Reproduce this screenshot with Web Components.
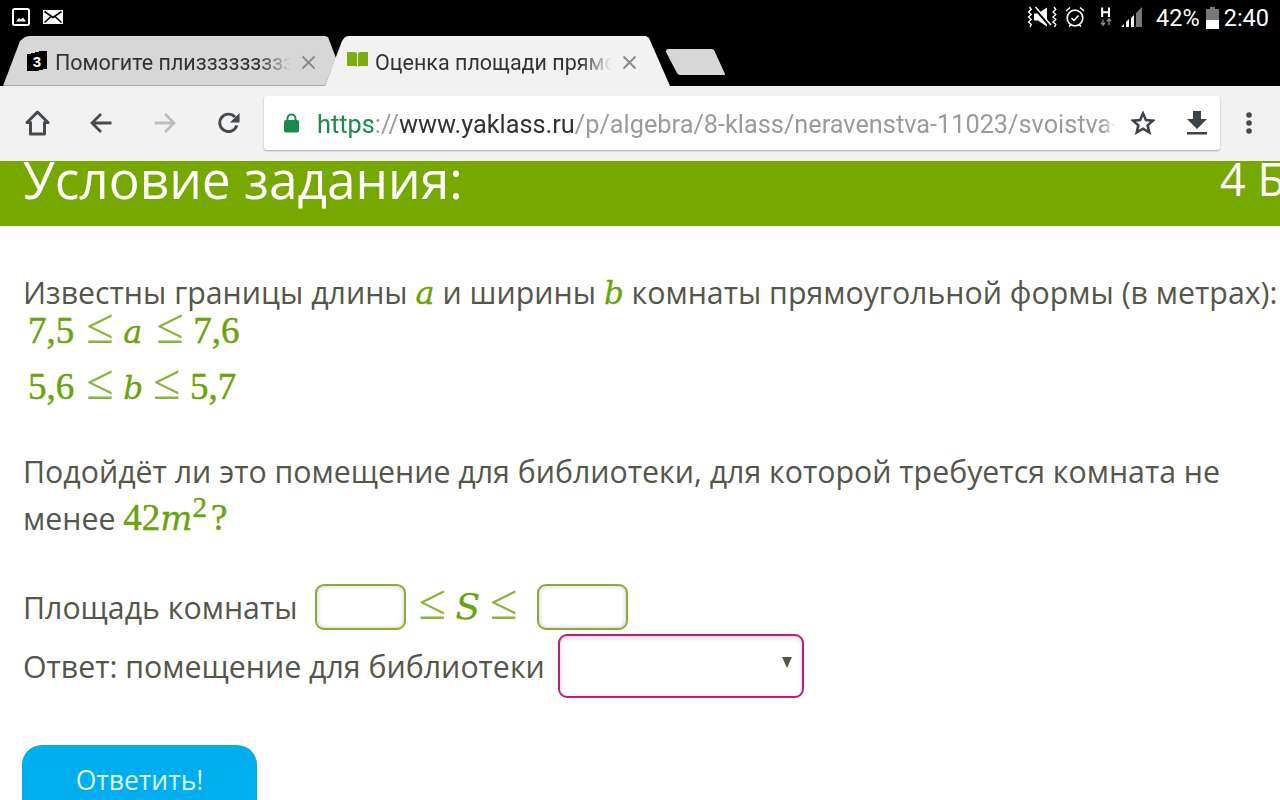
<!DOCTYPE html>
<html lang="ru"><head><meta charset="utf-8"><title>Оценка площади</title>
<style>html,body{margin:0;padding:0;background:#fff}</style></head>
<body>
<x-page>
  <x-status-bar></x-status-bar>
  <x-tab-strip>
    <x-tab kind="first" label="Помогите плизззззззззззз"></x-tab>
    <x-tab kind="active" label="Оценка площади прямоугольника"></x-tab>
    <x-new-tab></x-new-tab>
  </x-tab-strip>
  <x-toolbar></x-toolbar>
  <x-banner title="Условие задания:" score="4 Б"></x-banner>
  <x-task></x-task>
</x-page>
<script>
function def(name, css, html){
  customElements.define(name, class extends HTMLElement{
    constructor(){super();this.attachShadow({mode:'open'});}
    connectedCallback(){
      const h = typeof html==='function'?html(this):html;
      this.shadowRoot.innerHTML='<style>'+css+'</style>'+h;
    }
  });
}
def('x-page',`:host{display:block;width:1280px;height:800px;overflow:hidden;position:relative;background:#fff;font-family:"Open Sans",sans-serif}`,`<slot></slot>`);

def('x-status-bar',`:host{display:flex;align-items:center;justify-content:space-between;height:33px;background:#000;color:#fff;font:23.500px Roboto,sans-serif;padding:0 11px 0 12px;box-sizing:border-box}
.l,.r{display:flex;align-items:center}.l svg{display:block}
.t{position:relative;top:1px}`,`
<div class="l" style="gap:13px">
<svg width="18" height="18" viewBox="0 0 18 18"><rect x="1" y="1" width="16" height="16" rx="1.500" fill="none" stroke="#fff" stroke-width="2"/><path d="M4 13.500l3-3.500 2 1.500 2-2 3 4z" fill="#fff"/></svg>
<svg width="20" height="14" viewBox="0 0 20 14"><rect width="20" height="14" fill="#fff"/><path d="M1.500 1.500L10 7.500 18.500 1.500M1.500 12.500L8 6.500M18.500 12.500L12 6.500" fill="none" stroke="#000" stroke-width="1.600"/></svg>
</div>
<div class="r">
<svg width="30" height="22" viewBox="0 0 30 22" style="margin-right:8px"><path d="M2.500 1l1.800 2.500L1.500 6l2.800 2.500L1.500 11l2.800 2.500L1.500 16l2.800 2.500L3 21M27 1l1.800 2.500L26 6l2.800 2.500L26 11l2.800 2.500L26 16l2.800 2.500L27.500 21" fill="none" stroke="#fff" stroke-width="1.300"/><path d="M7 7.500h4l9-6v19l-9-6H7z" fill="#fff"/><path d="M7 1l17 20" stroke="#000" stroke-width="3"/><path d="M8.500 1L24 19" stroke="#fff" stroke-width="1.500"/></svg>
<svg width="20" height="22" viewBox="0 0 20 22" style="margin-right:15px"><circle cx="10" cy="12" r="7.800" fill="none" stroke="#fff" stroke-width="1.700"/><path d="M6.500 12l2.500 2.500 4.500-5" fill="none" stroke="#fff" stroke-width="1.600"/><path d="M1 5l4-3.500M19 5l-4-3.500M4 20.500l2-2M16 20.500l-2-2" stroke="#fff" stroke-width="1.600"/></svg>
<svg width="12" height="22" viewBox="0 0 14 22" style="margin-right:9px"><path d="M2.500 0v11M10.500 0v11M2.500 5.500h8" stroke="#fff" stroke-width="2.400" fill="none"/><path d="M3.500 20v-6M1 17.500l2.500 3 2.500-3M10.500 20.500v-7M8 16l2.500-3 2.500 3" stroke="#8a8a8a" stroke-width="1.600" fill="none"/></svg>
<svg width="22" height="22" viewBox="0 0 22 22" style="margin-right:13px"><path d="M0 21h3v-3zM5 21h3v-8l-3 3zM10 21h3V9l-3 3z" fill="#fff"/><path d="M15 21h6V1l-6 6z" fill="#777"/></svg>
<span class="t" style="margin-right:6px">42%</span>
<svg width="13" height="22" viewBox="0 0 13 22" style="margin-right:5px;position:relative;top:1px"><path d="M4 0h5v2h4v20H0V2h4z" fill="#777"/><path d="M0 13h13v9H0z" fill="#fff"/></svg>
<span class="t">2:40</span>
</div>`);

def('x-tab-strip',`:host{display:flex;height:53px;background:#000;position:relative}`,`<slot></slot>`);

def('x-tab',`:host{display:flex;align-items:center;height:50px;margin-top:3px;box-sizing:border-box;font:21.500px Roboto,sans-serif;color:#333;position:relative;flex:none}
:host([kind=first]){width:340px;margin-left:3px;background:linear-gradient(#d7d7d7 49px,#a8a8a8 49px);padding:2px 0 0 23px;clip-path:polygon(0 100%,17px 5px,22px 1px,26px 0,322px 0,325px 1px,333px 22px,322px 100%)}
:host([kind=active]){width:347px;margin-left:-18px;background:#f2f2f2;padding:2px 0 0 22px;clip-path:polygon(0 100%,17px 5px,20px 1px,23px 0,321px 0,324px 2px,345px 50px)}
.fav{flex:none;display:block}
.label{white-space:nowrap;overflow:hidden;-webkit-mask-image:linear-gradient(90deg,#000 calc(100% - 32px),transparent);mask-image:linear-gradient(90deg,#000 calc(100% - 32px),transparent)}
:host([kind=first]) .label{width:236px;margin-left:7px}
:host([kind=active]) .label{width:237px;margin-left:7px}
.x{flex:none;margin-left:10px;display:block}`,
 el=>{
  const first=el.getAttribute('kind')==='first';
  const fav=first?`<svg class="fav" width="22" height="22" viewBox="0 0 22 22" style="margin-top:-2px"><path d="M1 4h4V3h4V2h4V1h8v18h-4v1h-4v1H1z" fill="#000"/><text x="11" y="16.500" text-anchor="middle" font-family="Liberation Sans" font-weight="700" font-size="15" fill="#fff">3</text></svg>`
  :`<svg class="fav" width="21" height="16" viewBox="0 0 21 16" style="margin-top:-7px"><path d="M0 1h8l2 1v13.500H9L8 15H0zM21 1h-8l-2 1v13.500h1l1-.5h8z" fill="#7cae10"/></svg>`;
  return fav+`<span class="label">${el.getAttribute('label')}</span><svg class="x" width="15" height="15" viewBox="0 0 15 15"><path d="M1.500 1.500l12 12M13.500 1.500l-12 12" stroke="#8a8a8a" stroke-width="1.900"/></svg>`;
 });

def('x-new-tab',`:host{display:block;flex:none;margin:16px 0 0 -6px;height:26px;width:60px}svg{display:block}`,
 `<svg width="60" height="26" viewBox="0 0 60 26"><path d="M2 0h43.500q2 0 3 2L59 25q.5 1-1 1H14q-2 0-3-2L0 3Q0 0 2 0z" fill="#d7d7d7"/></svg>`);

def('x-toolbar',`:host{display:flex;align-items:center;height:75px;background:#f2f2f2;box-sizing:border-box;padding:0 0 1px 0;position:relative;z-index:2;border-bottom:1px solid #f4f5ec}
svg{display:block;flex:none}
.box{flex:none;width:956px;height:54px;background:#fff;border-radius:3px;box-shadow:0 1px 2px rgba(0,0,0,.3);display:flex;align-items:center;margin-left:24px;box-sizing:border-box;padding-left:20px;font:25.300px Roboto,sans-serif}
.url{width:799px;margin-left:18px;padding-top:3px;white-space:nowrap;overflow:hidden;color:#9b9b9b;-webkit-mask-image:linear-gradient(90deg,#000 calc(100% - 14px),transparent);mask-image:linear-gradient(90deg,#000 calc(100% - 14px),transparent)}
.g{color:#1b8a4c}.d{color:#333}`,`
<svg style="margin-left:25px" width="25" height="26" viewBox="0 0 25 26"><path d="M12.500 2L2 12.500h3.500V24h14V12.500H23z" fill="none" stroke="#444a4d" stroke-width="3" stroke-linejoin="round"/></svg>
<svg style="margin-left:40px" width="22" height="22" viewBox="0 0 22 22"><path d="M21.500 11H3M11 2l-9 9 9 9" fill="none" stroke="#444a4d" stroke-width="2.800"/></svg>
<svg style="margin-left:42px" width="22" height="22" viewBox="0 0 22 22"><path d="M.5 11H19M11 2l9 9-9 9" fill="none" stroke="#bdbdbd" stroke-width="2.800"/></svg>
<svg style="margin-left:42px" width="22" height="24" viewBox="0 0 24 24"><path d="M20.500 14.500A9.500 9.500 0 1 1 18.500 5.500" fill="none" stroke="#444a4d" stroke-width="3.200"/><path d="M23.500 1v10.500H13z" fill="#444a4d"/></svg>
<div class="box">
<svg width="15" height="20" viewBox="0 0 15 20"><path d="M3.500 8V5.500a4 4 0 0 1 8 0V8" fill="none" stroke="#1b8a4c" stroke-width="2"/><rect y="7" width="15" height="12.500" rx="2" fill="#1b8a4c"/></svg>
<div class="url"><span class="g">https</span>://<span class="d">www.yaklass.ru</span>/p/algebra/8-klass/neravenstva-11023/svoistva-chislovykh</div>
<svg style="margin-left:15px" width="24" height="24" viewBox="0 0 26 26"><path d="M13 2.500l3.100 7.200 7.800.7-5.900 5.200 1.800 7.600L13 19.200 6.200 23.200 8 15.600 2.100 10.400l7.800-.7z" fill="none" stroke="#3e4347" stroke-width="2.800"/></svg>
<svg style="margin-left:32px" width="20" height="24" viewBox="0 0 20 24"><path d="M6 0h8v8h6L10 18 0 8h6z" fill="#3e4347"/><rect y="21" width="20" height="2.500" fill="#3e4347"/></svg>
</div>
<svg style="margin-left:25px" width="8" height="24" viewBox="0 0 8 24"><circle cx="4" cy="4" r="2.800" fill="#444a4d"/><circle cx="4" cy="12" r="2.800" fill="#444a4d"/><circle cx="4" cy="20" r="2.800" fill="#444a4d"/></svg>`);

def('x-banner',`:host{display:flex;justify-content:space-between;align-items:flex-end;height:65px;background:#76a900;color:#fff;padding-left:23px;box-sizing:border-box;overflow:hidden;white-space:nowrap;font-family:"Open Sans",sans-serif}
.t{font-size:51.400px;line-height:50px;padding-bottom:22px}
.s{font-size:45px;line-height:50px;padding-bottom:22px;margin-right:-5px}`,
 el=>`<span class="t">${el.getAttribute('title')}</span><span class="s">${el.getAttribute('score')}</span>`);

def('x-m',`:host{display:inline;line-height:0;font-family:"Liberation Serif",serif;color:#6aa30c;font-size:37px;-webkit-text-stroke:.45px #6aa30c}
:host(.a){font-family:"DejaVu Serif",serif;font-style:italic;font-size:32px;-webkit-text-stroke:.3px #6aa30c}
:host(.b){letter-spacing:-3px;font-size:31px;margin-right:3px}
:host(.s){font-size:36px;letter-spacing:-2px}`,`<slot></slot>`);
def('x-leq',`:host{display:inline-block;font-family:"Liberation Serif",serif;color:#8bb43c;font-size:50px;line-height:0;margin:0 12px;width:25px;text-align:center}`,`≤`);

def('x-field',`:host{display:inline-block;box-sizing:border-box;width:91px;height:46px;border:2px solid #8aab3a;border-radius:9px;background:#fff;box-shadow:inset 0 0 5px rgba(0,0,0,.22);vertical-align:middle;flex:none}`,``);
def('x-select',`:host{display:inline-flex;align-items:center;justify-content:flex-end;box-sizing:border-box;width:246px;height:64px;border:2px solid #b8207f;border-radius:9px;background:#fff;box-shadow:inset 0 2px 5px rgba(0,0,0,.16);padding:0 10px 0 0;vertical-align:middle;flex:none}
i{display:block;width:0;height:0;border-left:5.500px solid transparent;border-right:5.500px solid transparent;border-top:11px solid #55564a;margin-top:-8px}`,`<i></i>`);
def('x-answer',`:host{display:flex;align-items:flex-start;justify-content:center;box-sizing:border-box;width:235px;height:70px;background:#00aeef;border-radius:20px 20px 0 0;color:#d9f4ff;font:26.500px/1 "Open Sans",sans-serif;padding-top:22px;margin-left:-1px}`,`<slot></slot>`);

def('x-task',`:host{display:block;padding-left:23px;color:#55564a;font:30.300px "Open Sans",sans-serif;white-space:normal}
.p1{margin:0;padding-top:46px;line-height:42px;white-space:nowrap}
.m{display:block;height:56px;line-height:56px;padding-left:5px}
.p2{margin:32px 0 0;line-height:47px}
.row{display:flex;align-items:center;white-space:nowrap}
.i{font-family:"DejaVu Serif",serif;font-style:italic;font-size:34px;-webkit-text-stroke:.3px #6aa30c}
sup{font-size:29px;line-height:0;margin-right:4px}`,`
<p class="p1">Известны границы длины <x-m class="a">a</x-m> и ширины <x-m class="a b">b</x-m> комнаты прямоугольной формы (в метрах):</p>
<div class="m" style="margin-top:-10px"><x-m>7,5</x-m><x-leq></x-leq><x-m class="a" style="margin-right:2px">a</x-m><x-leq></x-leq><x-m>7,6</x-m></div>
<div class="m"><x-m>5,6</x-m><x-leq></x-leq><x-m class="a b" style="margin-right:1px">b</x-m><x-leq></x-leq><x-m>5,7</x-m></div>
<p class="p2">Подойдёт ли это помещение для библиотеки, для которой требуется комната не менее <x-m>42<span class="i">m</span><sup>2</sup>?</x-m></p>
<div class="row" style="margin-top:39px;height:52px">Площадь комнаты<x-field style="margin-left:18px"></x-field><span><x-leq></x-leq><x-m class="a s">S</x-m><x-leq></x-leq></span><x-field style="margin-left:10px"></x-field></div>
<div class="row" style="margin-top:1px;height:64px">Ответ: помещение для библиотеки<x-select style="margin-left:13px"></x-select></div>
<div style="margin-top:47px"><x-answer>Ответить!</x-answer></div>`);
</script>
</body></html>
